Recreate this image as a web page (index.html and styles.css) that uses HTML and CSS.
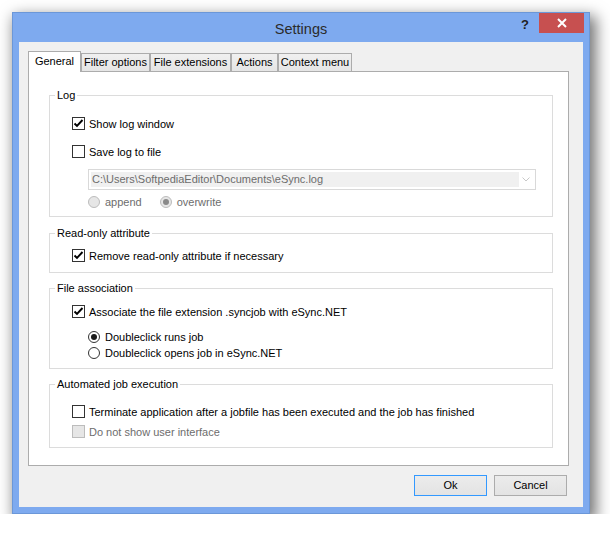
FILE: index.html
```html
<!DOCTYPE html>
<html>
<head>
<meta charset="utf-8">
<title>Settings</title>
<link rel="stylesheet" href="styles.css">
</head>
<body>
<div class="stage">
  <div class="window">
    <div class="titlebar">
      <div></div>
      <div class="title">Settings</div>
      <div class="controls">
        <span class="help">?</span>
        <span class="close"><svg width="12" height="12" viewBox="0 0 12 12"><path d="M2 2 L10 10 M10 2 L2 10" stroke="#fff" stroke-width="2" fill="none"/></svg></span>
      </div>
    </div>
    <div class="client">
      <div class="tabs">
        <div class="tab active w-general">General</div>
        <div class="tab w-filter">Filter options</div>
        <div class="tab w-ext">File extensions</div>
        <div class="tab w-actions">Actions</div>
        <div class="tab w-context">Context menu</div>
      </div>
      <div class="panel">
        <fieldset class="group g-log">
          <legend>Log</legend>
          <div class="inner">
            <div class="row"><span class="cb checked"><svg width="13" height="13" viewBox="0 0 13 13"><polyline points="2.5,6.5 5,9 10.5,3" fill="none" stroke="#000" stroke-width="1.9"/></svg></span><span>Show log window</span></div>
            <div class="row r-save"><span class="cb"></span><span>Save log to file</span></div>
            <div class="combo">
              <div class="combo-field">C:\Users\SoftpediaEditor\Documents\eSync.log</div>
              <div class="combo-arrow"><svg width="8" height="5" viewBox="0 0 8 5"><polyline points="0.5,0.5 4,4 7.5,0.5" fill="none" stroke="#c8c8c8" stroke-width="1"/></svg></div>
            </div>
            <div class="radios-inline">
              <div class="row"><span class="rb disabled"></span><span class="disabled-text">append</span></div>
              <div class="row"><span class="rb disabled on"></span><span class="disabled-text">overwrite</span></div>
            </div>
          </div>
        </fieldset>

        <fieldset class="group g-ro">
          <legend>Read-only attribute</legend>
          <div class="inner">
            <div class="row"><span class="cb checked"><svg width="13" height="13" viewBox="0 0 13 13"><polyline points="2.5,6.5 5,9 10.5,3" fill="none" stroke="#000" stroke-width="1.9"/></svg></span><span>Remove read-only attribute if necessary</span></div>
          </div>
        </fieldset>

        <fieldset class="group g-fa">
          <legend>File association</legend>
          <div class="inner">
            <div class="row"><span class="cb checked"><svg width="13" height="13" viewBox="0 0 13 13"><polyline points="2.5,6.5 5,9 10.5,3" fill="none" stroke="#000" stroke-width="1.9"/></svg></span><span>Associate the file extension .syncjob with eSync.NET</span></div>
            <div class="row sub r-run"><span class="rb on"></span><span>Doubleclick runs job</span></div>
            <div class="row sub r-open"><span class="rb"></span><span>Doubleclick opens job in eSync.NET</span></div>
          </div>
        </fieldset>

        <fieldset class="group g-auto">
          <legend>Automated job execution</legend>
          <div class="inner">
            <div class="row"><span class="cb"></span><span>Terminate application after a jobfile has been executed and the job has finished</span></div>
            <div class="row r-noui"><span class="cb disabled"></span><span class="disabled-text">Do not show user interface</span></div>
          </div>
        </fieldset>
      </div>
      <div class="buttons">
        <div class="btn default">Ok</div>
        <div class="btn">Cancel</div>
      </div>
    </div>
  </div>
</div>
</body>
</html>
```

FILE: styles.css
```css
html, body {
  margin: 0;
  padding: 0;
  background: #ffffff;
}
body {
  font-family: "Liberation Sans", Arial, sans-serif;
  font-size: 11px;
  color: #000;
}
.stage {
  padding: 12px 0 0 12px;
}
.window {
  width: 578px;
  height: 502px;
  box-sizing: border-box;
  background: #7eaaef;
  border: 1px solid #6b97d8;
  box-shadow: 4px 6px 14px 2px rgba(0, 0, 0, 0.55);
  display: flex;
  flex-direction: column;
}
.titlebar {
  height: 29px;
  display: grid;
  grid-template-columns: 1fr auto 1fr;
  flex: none;
}
.title {
  font-size: 14.5px;
  color: #2b2b2b;
  padding-top: 8px;
  line-height: 16px;
}
.controls {
  display: flex;
  justify-content: flex-end;
  align-items: flex-start;
  margin-right: 5px;
}
.help {
  font-weight: bold;
  font-size: 13px;
  color: #222;
  line-height: 14px;
  margin-top: 5px;
  margin-right: 10px;
}
.close {
  width: 45px;
  height: 20px;
  background: #c75050;
  display: flex;
  align-items: center;
  justify-content: center;
}
.client {
  flex: 1;
  margin: 0 6px 6px 6px;
  background: #f0f0f0;
  padding: 9px 0 0 9px;
  display: flex;
  flex-direction: column;
}
.tabs {
  display: flex;
  align-items: flex-end;
  height: 20px;
  position: relative;
  z-index: 1;
}
.tab {
  box-sizing: border-box;
  height: 18px;
  border: 1px solid #acacac;
  border-bottom: none;
  background: linear-gradient(#f0f0f0, #e5e5e5);
  text-align: center;
  line-height: 17px;
  white-space: nowrap;
}
.tab.active {
  height: 21px;
  margin-bottom: -1px;
  background: #fff;
  line-height: 18px;
  padding-bottom: 2px;
}
.w-general { width: 53px; }
.w-filter { width: 69px; }
.w-ext { width: 81px; }
.w-actions { width: 47px; }
.w-context { width: 74px; }
.panel {
  width: 541px;
  height: 395px;
  box-sizing: border-box;
  border: 1px solid #acacac;
  background: #fff;
  padding: 17px 0 0 20px;
}
.group {
  margin: 0;
  padding: 0;
  width: 504px;
  box-sizing: border-box;
  border: 1px solid #dcdcdc;
  min-width: 0;
}
.group legend {
  padding: 0 2px;
  margin-left: 5px;
  line-height: 13px;
  font-size: 11px;
}
.inner {
  padding-left: 22px;
}
.row {
  display: flex;
  align-items: center;
  height: 13px;
  gap: 4px;
  white-space: nowrap;
}
.cb {
  width: 13px;
  height: 13px;
  box-sizing: border-box;
  border: 1px solid #333;
  background: #fff;
  flex: none;
  display: flex;
  align-items: center;
  justify-content: center;
}
.cb svg {
  margin: -1px;
}
.cb.disabled {
  border-color: #bcbcbc;
  background: #e6e6e6;
}
.rb {
  width: 12px;
  height: 12px;
  box-sizing: border-box;
  border: 1px solid #333;
  border-radius: 50%;
  background: #fff;
  flex: none;
  display: flex;
  align-items: center;
  justify-content: center;
  margin-right: 1px;
}
.rb.on::after {
  content: "";
  width: 6px;
  height: 6px;
  border-radius: 50%;
  background: #1a1a1a;
}
.rb.disabled {
  border-color: #bcbcbc;
  background: #e6e6e6;
}
.rb.disabled.on::after {
  background: #8a8a8a;
}
.disabled-text {
  color: #6d6d6d;
}

/* Log group */
.g-log .inner { padding-top: 15px; padding-bottom: 8px; }
.r-save { margin-top: 15px; }
.combo {
  margin: 11px 0 0 16px;
  width: 448px;
  height: 21px;
  box-sizing: border-box;
  border: 1px solid #d9d9d9;
  padding: 2px;
  display: flex;
}
.combo-field {
  flex: 1;
  background: #f0f0f0;
  color: #6d6d6d;
  line-height: 15px;
  padding-left: 1px;
  white-space: nowrap;
}
.combo-arrow {
  width: 14px;
  display: flex;
  align-items: center;
  justify-content: center;
}
.radios-inline {
  display: flex;
  margin: 5px 0 0 16px;
  gap: 18px;
}

/* Read-only group */
.g-ro { margin-top: 10px; }
.g-ro .inner { padding-top: 9px; padding-bottom: 10px; }

/* File association */
.g-fa { margin-top: 9px; }
.g-fa .inner { padding-top: 10px; padding-bottom: 9px; }
.sub { margin-left: 16px; }
.r-run { margin-top: 12px; }
.r-open { margin-top: 3px; }

/* Automated */
.g-auto { margin-top: 9px; }
.g-auto .inner { padding-top: 14px; padding-bottom: 9px; }
.r-noui { margin-top: 7px; }

.buttons {
  display: flex;
  justify-content: flex-end;
  gap: 7px;
  margin: 9px 16px 0 0;
}
.btn {
  width: 73px;
  height: 21px;
  box-sizing: border-box;
  border: 1px solid #acacac;
  background: linear-gradient(#ececec, #e3e3e3);
  text-align: center;
  line-height: 19px;
}
.btn.default {
  border-color: #3399ff;
}
```
